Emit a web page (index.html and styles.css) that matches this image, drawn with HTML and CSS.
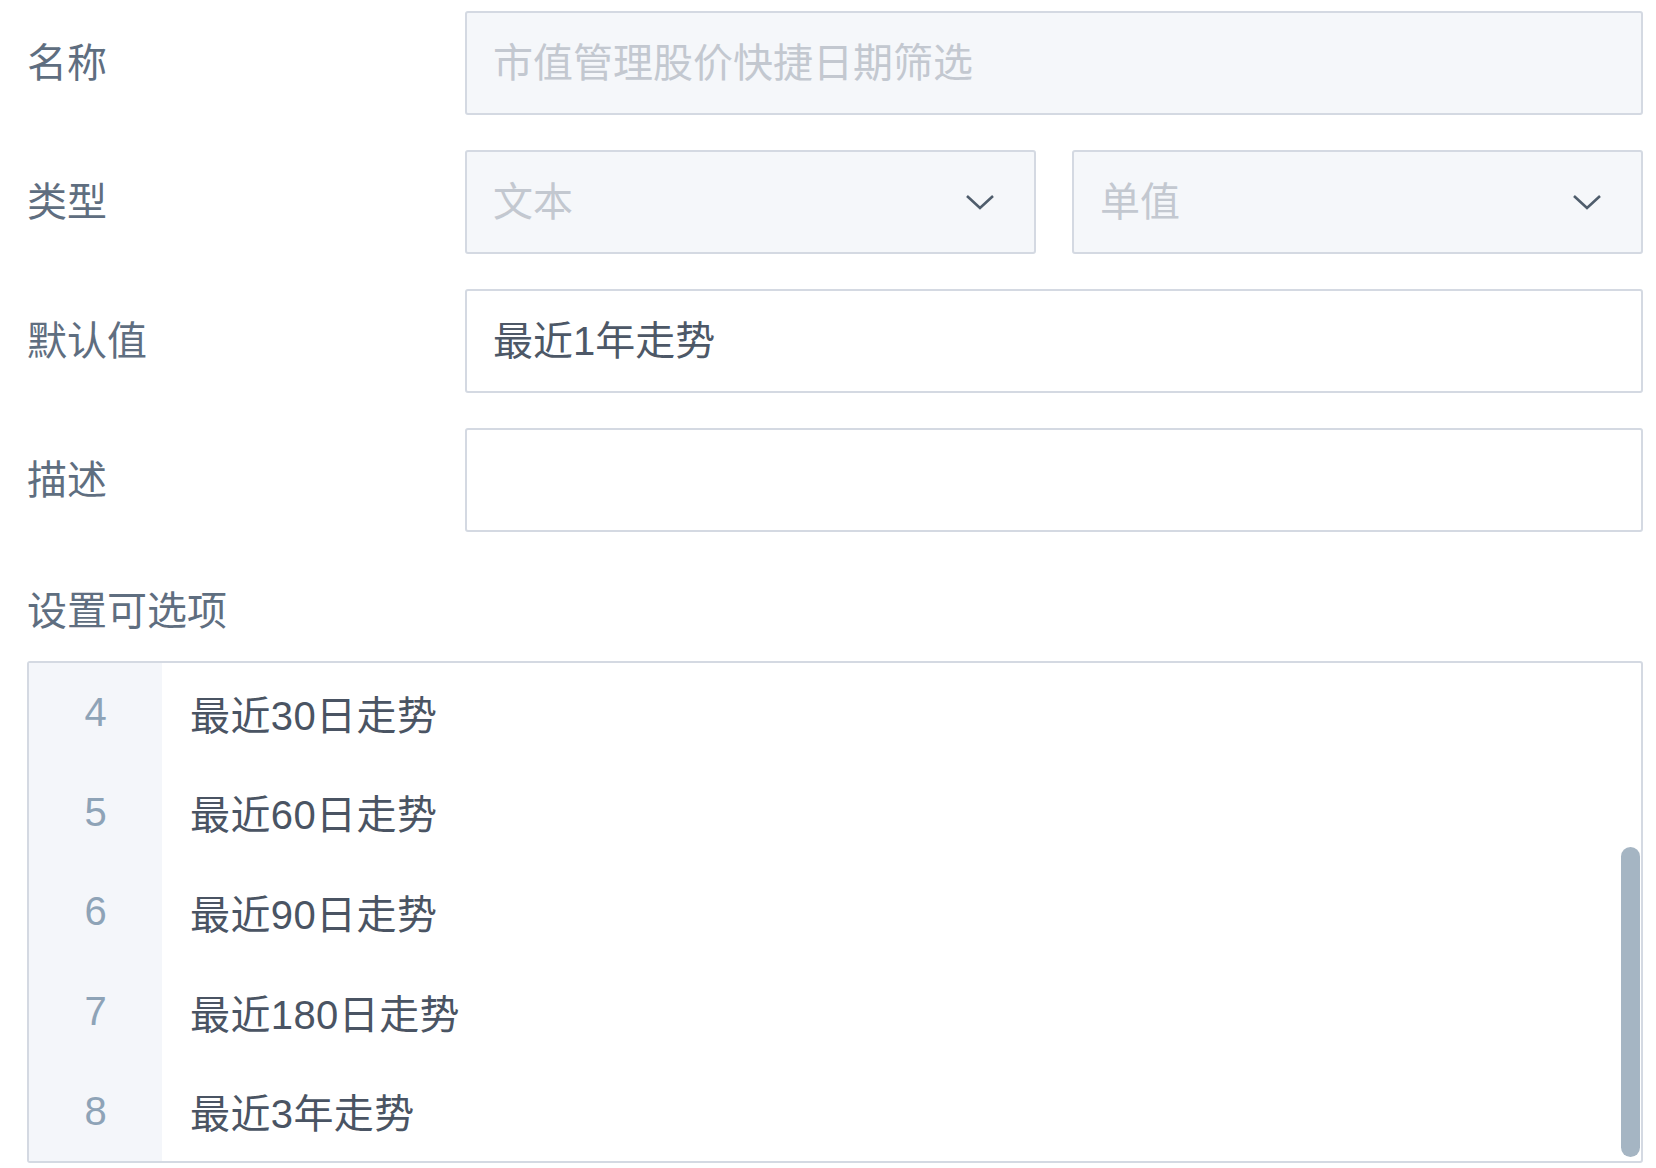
FILE: index.html
```html
<!DOCTYPE html>
<html lang="zh-CN">
<head>
    <meta charset="UTF-8">
    <title>筛选器设置</title>
    <link rel="stylesheet" href="styles.css">
</head>
<body>

<div class="panel">
    <div class="form-row">
        <div class="form-label">名称</div>
        <div class="field disabled">
            <span class="placeholder">市值管理股价快捷日期筛选</span>
        </div>
    </div>

    <div class="form-row">
        <div class="form-label">类型</div>
        <div class="select-pair">
            <div class="field disabled select">
                <span class="placeholder">文本</span>
                <svg class="chevron" width="30" height="16" viewBox="0 0 30 16"><polyline points="2,2 15,14 28,2" fill="none" stroke="#4f5d6c" stroke-width="2.6"/></svg>
            </div>
            <div class="field disabled select">
                <span class="placeholder">单值</span>
                <svg class="chevron" width="30" height="16" viewBox="0 0 30 16"><polyline points="2,2 15,14 28,2" fill="none" stroke="#4f5d6c" stroke-width="2.6"/></svg>
            </div>
        </div>
    </div>

    <div class="form-row">
        <div class="form-label">默认值</div>
        <div class="field">
            <span class="value">最近1年走势</span>
        </div>
    </div>

    <div class="form-row">
        <div class="form-label">描述</div>
        <div class="field"></div>
    </div>

    <div class="section-label">设置可选项</div>

    <div class="options-box">
        <div class="option-row"><div class="line-no">4</div><div class="option-text">最近30日走势</div></div>
        <div class="option-row"><div class="line-no">5</div><div class="option-text">最近60日走势</div></div>
        <div class="option-row"><div class="line-no">6</div><div class="option-text">最近90日走势</div></div>
        <div class="option-row"><div class="line-no">7</div><div class="option-text">最近180日走势</div></div>
        <div class="option-row"><div class="line-no">8</div><div class="option-text">最近3年走势</div></div>
        <div class="scroll-thumb"></div>
    </div>
</div>

</body>
</html>
```

FILE: styles.css
```css
* { margin: 0; padding: 0; box-sizing: border-box; }
body {
    font-family: "Liberation Sans", "Noto Sans CJK SC", sans-serif;
    background: #fff;
    color: #4a5565;
}
.panel { padding: 11px 13px 0 27px; }
.form-row {
    display: grid;
    grid-template-columns: 438px 1fr;
    align-items: center;
    margin-bottom: 35px;
}
.form-label { font-size: 40px; line-height: 56px; color: #5f6e80; }
.field {
    height: 104px;
    border: 2px solid #d4d9e2;
    border-radius: 3px;
    background: #fff;
    display: flex;
    align-items: center;
    padding: 0 26px;
    font-size: 40px;
    line-height: 56px;
}
.field.disabled { background: #f5f7fa; }
.placeholder { color: #c3c8d0; }
.value { color: #4d5867; }
.select-pair { display: grid; grid-template-columns: 1fr 1fr; gap: 36px; }
.select { justify-content: space-between; padding-right: 39px; }
.chevron { display: block; }
.section-label {
    font-size: 40px;
    line-height: 56px;
    color: #5f6e80;
    margin-top: 51px;
    margin-bottom: 22px;
}
.options-box {
    position: relative;
    height: 502px;
    border: 2px solid #d4d9e2;
    border-radius: 3px;
    overflow: hidden;
}
.option-row { display: flex; height: 99.6px; }
.line-no {
    width: 133px;
    background: #f4f6fa;
    color: #8ea3b7;
    font-size: 40px;
    display: flex;
    align-items: center;
    justify-content: center;
}
.option-text {
    padding-left: 28px;
    font-size: 40px;
    letter-spacing: 0.4px;
    color: #4a5463;
    display: flex;
    align-items: center;
}
.scroll-thumb {
    position: absolute;
    right: 1px;
    bottom: 4px;
    width: 19px;
    height: 310px;
    border-radius: 10px;
    background: #a5b5c3;
}
```
